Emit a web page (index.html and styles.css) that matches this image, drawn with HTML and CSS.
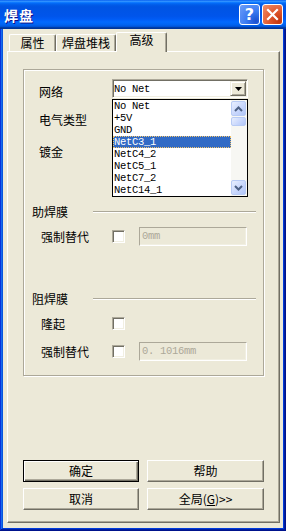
FILE: index.html
```html
<!DOCTYPE html>
<html lang="zh-CN">
<head>
  <meta charset="UTF-8">
  <title>焊盘</title>
  <link rel="stylesheet" href="styles.css">
</head>
<body>
  <div class="window">
    <div class="titlebar">
      <span class="title">焊盘</span>
      <div class="title-buttons">
        <span class="tb-btn tb-help">?</span>
        <span class="tb-btn tb-close">
          <svg width="13" height="13" viewBox="0 0 13 13"><path d="M2 2 L11 11 M11 2 L2 11" stroke="#fff" stroke-width="2.2" stroke-linecap="square"/></svg>
        </span>
      </div>
    </div>

    <div class="window-body">
      <div class="tabs">
        <div class="tab tab-attr">属性</div>
        <div class="tab tab-stack">焊盘堆栈</div>
        <div class="tab tab-adv active">高级</div>
      </div>

      <div class="panel">
        <div class="group">
          <div class="net-row">
            <span class="field-label">网络</span>
            <div class="combo">
              <span class="combo-text">No Net</span>
              <span class="combo-btn">
                <svg width="7" height="4" viewBox="0 0 7 4"><polygon points="0,0 7,0 3.5,4" fill="#000"/></svg>
              </span>
              <!-- open drop-down list -->
              <div class="dropdown">
                <div class="options">
                  <div class="opt">No Net</div>
                  <div class="opt">+5V</div>
                  <div class="opt">GND</div>
                  <div class="opt sel">NetC3_1</div>
                  <div class="opt">NetC4_2</div>
                  <div class="opt">NetC5_1</div>
                  <div class="opt">NetC7_2</div>
                  <div class="opt">NetC14_1</div>
                </div>
                <div class="scroll">
                  <span class="sb-btn">
                    <svg width="9" height="6" viewBox="0 0 9 6"><polyline points="1,5 4.5,1.5 8,5" fill="none" stroke="#4d6185" stroke-width="2"/></svg>
                  </span>
                  <span class="sb-thumb"></span>
                  <span class="sb-btn sb-down">
                    <svg width="9" height="6" viewBox="0 0 9 6"><polyline points="1,1 4.5,4.5 8,1" fill="none" stroke="#4d6185" stroke-width="2"/></svg>
                  </span>
                </div>
              </div>
            </div>
          </div>
          <div class="plain-row row-type">电气类型</div>
          <div class="plain-row row-plate">镀金</div>

          <div class="section sec-paste">
            <span class="sec-title">助焊膜</span>
            <span class="rule"></span>
          </div>
          <div class="opt-row row-paste">
            <span class="opt-label">强制替代</span>
            <span class="check"></span>
            <span class="text-field">0mm</span>
          </div>

          <div class="section sec-mask">
            <span class="sec-title">阻焊膜</span>
            <span class="rule"></span>
          </div>
          <div class="opt-row row-tent">
            <span class="opt-label">隆起</span>
            <span class="check"></span>
          </div>
          <div class="opt-row row-mask">
            <span class="opt-label">强制替代</span>
            <span class="check"></span>
            <span class="text-field">0.&nbsp;1016mm</span>
          </div>
        </div>

        <div class="buttons">
          <button class="btn btn-default">确定</button>
          <button class="btn">帮助</button>
          <button class="btn">取消</button>
          <button class="btn">全局(<u>G</u>)&gt;&gt;</button>
        </div>
      </div>
    </div>
  </div>
</body>
</html>
```

FILE: styles.css
```css
* {
  margin: 0;
  padding: 0;
  box-sizing: border-box;
}
body {
  width: 286px;
  height: 531px;
  overflow: hidden;
  font-family: "Noto Sans CJK SC", "Noto Sans", sans-serif;
  font-size: 12px;
  color: #000;
  background: #0054e3;
}

/* window frame */
.window {
  display: flex;
  flex-direction: column;
  height: 531px;
  background: #0855dd;
  box-shadow: inset -1px -1px #00138c, inset 1px 1px #0831d9, inset -2px -2px #001ea0,
    inset 2px 2px #166aee, inset -3px -3px #003bda, inset 3px 3px #0855dd;
}
.titlebar {
  display: flex;
  align-items: center;
  justify-content: space-between;
  height: 29px;
  padding: 0 3px 0 4px;
  background: linear-gradient(to bottom, #0058ee 0%, #3593ff 4%, #288eff 6%, #127dff 8%,
    #036ffc 10%, #0262ee 14%, #0057e5 20%, #0054e3 24%, #0055eb 56%, #005bf5 66%,
    #026afe 76%, #0062ef 86%, #0052d6 92%, #0040ab 94%, #003092 100%);
}
.title {
  color: #fff;
  font-weight: bold;
  font-size: 14px;
  letter-spacing: 1px;
  text-shadow: 1px 1px #0f1089;
}
.title-buttons {
  display: flex;
  gap: 2px;
}
.tb-btn {
  display: flex;
  align-items: center;
  justify-content: center;
  width: 21px;
  height: 21px;
  border: 1px solid #fff;
  border-radius: 3px;
}
.tb-help {
  color: #fff;
  font-family: "DejaVu Sans", sans-serif;
  font-weight: bold;
  font-size: 16px;
  background: radial-gradient(circle at 85% 85%, #1b4fd0 0%, #3c7cf2 45%, #6f9ff8 100%);
}
.tb-close {
  background: radial-gradient(circle at 85% 85%, #c2360f 0%, #e0582e 45%, #f0916e 100%);
}

.window-body {
  flex: 1;
  display: flex;
  flex-direction: column;
  margin: 0 3px 3px 3px;
  padding: 3px 3px 5px 4px;
  background: #ece9d8;
}

/* tabs */
.tabs {
  display: flex;
  align-items: flex-end;
  height: 20px;
  margin-bottom: -1px;
  padding-left: 2px;
}
.tab {
  height: 18px;
  padding-top: 1px;
  line-height: 14px;
  text-align: center;
  border: 1px solid;
  border-bottom: none;
  border-color: #fff #716f64 #fff #fff;
  border-radius: 2px 2px 0 0;
  box-shadow: inset -1px 0 #aca899;
}
.tab-attr { width: 47px; }
.tab-stack { width: 60px; }
.tab-adv { width: 51px; }
.tab.active {
  position: relative;
  z-index: 1;
  height: 20px;
  padding-top: 0;
  background: #ece9d8;
}

.panel {
  flex: 1;
  display: flex;
  flex-direction: column;
  padding: 17px 0 12px 15px;
  border: 1px solid;
  border-color: #fff #716f64 #716f64 #fff;
  box-shadow: inset -1px -1px #aca899;
}

/* etched frame */
.group {
  width: 241px;
  height: 307px;
  border: 1px solid #aca899;
  box-shadow: inset 1px 1px #fff, 1px 1px #fff;
}
.net-row {
  display: flex;
  margin-top: 9px;
  padding-left: 15px;
}
.field-label {
  width: 73px;
  padding-top: 6px;
  line-height: 14px;
}
.combo {
  position: relative;
  display: flex;
  align-items: center;
  justify-content: space-between;
  width: 136px;
  height: 19px;
  padding-left: 1px;
  background: #fff;
  border: 1px solid;
  border-color: #aca899 #fff #fff #aca899;
  box-shadow: inset 1px 1px #716f64, inset -1px -1px #f1efe2;
}
.combo-text,
.opt,
.text-field {
  font-family: "Liberation Mono", monospace;
  font-size: 10.5px;
  letter-spacing: -0.3px;
}
.combo-btn {
  display: flex;
  align-items: center;
  justify-content: center;
  width: 16px;
  height: 15px;
  margin-right: 1px;
  background: #ece9d8;
  border: 1px solid;
  border-color: #f1efe2 #716f64 #716f64 #f1efe2;
  box-shadow: inset 1px 1px #fff, inset -1px -1px #aca899;
}

.dropdown {
  position: absolute;
  left: -1px;
  top: 19px;
  z-index: 2;
  display: flex;
  width: 136px;
  height: 98px;
  background: #fff;
  border: 1px solid #000;
}
.options {
  flex: 1;
}
.opt {
  height: 12px;
  line-height: 12px;
  padding-left: 1px;
}
.opt.sel {
  background: #316ac5;
  color: #fff;
  outline: 1px dotted #f2c46c;
  outline-offset: -1px;
}
.scroll {
  display: flex;
  flex-direction: column;
  width: 16px;
  padding: 1px 1px 1px 0;
  background: #f7f7f3;
}
.sb-btn,
.sb-thumb {
  display: flex;
  align-items: center;
  justify-content: center;
  height: 15px;
  border: 1px solid #b8cbf5;
  border-radius: 2px;
  background: linear-gradient(135deg, #e8effe 0%, #c6d5fc 60%, #b1c6f7 100%);
}
.sb-thumb {
  height: 9px;
  margin-top: 1px;
}
.sb-down {
  margin-top: auto;
}

.plain-row {
  padding-left: 15px;
  line-height: 14px;
}
.row-type { margin-top: 14px; }
.row-plate { margin-top: 18px; }

.section {
  display: flex;
  align-items: center;
  padding: 0 7px 0 8px;
  line-height: 14px;
}
.sec-paste { margin-top: 46px; }
.sec-mask { margin-top: 46px; }
.sec-title {
  width: 36px;
}
.rule {
  flex: 1;
  height: 2px;
  margin-left: 25px;
  border-top: 1px solid #aca899;
  border-bottom: 1px solid #fff;
}

.opt-row {
  display: flex;
  align-items: center;
  height: 19px;
  padding-left: 17px;
}
.row-paste { margin-top: 8px; }
.row-tent { margin-top: 8px; }
.row-mask { margin-top: 9px; }
.opt-label {
  width: 71px;
}
.check {
  width: 13px;
  height: 13px;
  background: #fff;
  border: 1px solid;
  border-color: #aca899 #fff #fff #aca899;
  box-shadow: inset 1px 1px #716f64, inset -1px -1px #f1efe2;
}
.text-field {
  width: 108px;
  height: 19px;
  margin-left: 14px;
  padding-left: 2px;
  line-height: 16px;
  color: #aca899;
  background: #ece9d8;
  border: 1px solid;
  border-color: #aca899 #fff #fff #aca899;
  box-shadow: inset -1px -1px #f1efe2;
}

/* bottom buttons */
.buttons {
  display: grid;
  grid-template-columns: 116px 117px;
  grid-auto-rows: 22px;
  column-gap: 8px;
  row-gap: 6px;
  margin-top: auto;
}
.btn {
  font-family: inherit;
  font-size: 12px;
  line-height: 18px;
  color: #000;
  background: #ece9d8;
  border: 1px solid;
  border-color: #fff #716f64 #716f64 #fff;
  box-shadow: inset -1px -1px #aca899;
}
.btn-default {
  border-color: #000;
  box-shadow: inset 1px 1px #fff, inset -1px -1px #716f64, inset -2px -2px #aca899;
}
```
